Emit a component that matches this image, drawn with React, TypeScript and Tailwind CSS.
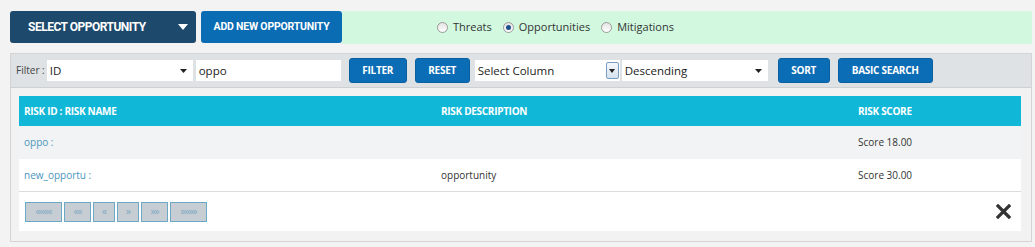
import { useState } from "react";

const font = { fontFamily: '"Open Sans", "Liberation Sans", sans-serif' };

const Radio = ({ checked }: { checked?: boolean }) => (
    <span className="inline-flex items-center justify-center w-[11px] h-[11px] rounded-full border border-[#9a9a9a] bg-gradient-to-b from-[#e4e4e4] to-[#ffffff]">
        {checked && <span className="w-[5px] h-[5px] rounded-full bg-[#1f4f8a]" />}
    </span>
);

const Caret = () => (
    <svg width="7" height="4" viewBox="0 0 7 4"><path d="M0 0h7L3.5 4z" fill="#222" /></svg>
);

const FilterSelect = ({ value, w }: { value: string; w: string }) => (
    <div className={`${w} h-[21px] bg-white flex items-center justify-between pl-[3px] pr-[6px] text-[11.5px] text-[#222]`}>
        <span>{value}</span>
        <Caret />
    </div>
);

const BlueBtn = ({ label, w }: { label: string; w: string }) => (
    <div className={`${w} h-[25px] rounded-[3px] bg-[#0b6db5] border border-[#0a5f9e] flex items-center justify-center text-white text-[10px] font-bold tracking-tight`}>
        {label}
    </div>
);

const pages = [
    { t: "««««", w: "w-[37px]" },
    { t: "««", w: "w-[27px]" },
    { t: "«", w: "w-[22px]" },
    { t: "»", w: "w-[22px]" },
    { t: "»»", w: "w-[27px]" },
    { t: "»»»»", w: "w-[37px]" },
];

const App = () => {
    let [mode] = useState("opportunities");
    return (
        <div className="w-[1035px] h-[247px] bg-[#f3f3f3] pt-[11px] pl-[10px] pr-[3px] overflow-hidden" style={font}>
            <div className="flex h-[33px]">
                <div className="w-[186px] h-[32px] rounded-[3px] bg-[#1c496c] text-white flex items-center pl-[18px] pr-[8px] justify-between text-[12px] font-bold" style={{ fontFamily: 'Roboto, "Liberation Sans", sans-serif' }}>
                    <span className="tracking-[-0.5px]">SELECT OPPORTUNITY</span>
                    <svg width="10" height="6" viewBox="0 0 10 6"><path d="M0 0h10L5 6z" fill="#fff" /></svg>
                </div>
                <div className="ml-[5px] w-[141px] h-[32px] rounded-[3px] bg-[#0a6cb3] text-white flex items-center justify-center text-[10.5px] font-bold tracking-[-0.2px]" style={{ fontFamily: 'Roboto, "Liberation Sans", sans-serif' }}>
                    ADD NEW OPPORTUNITY
                </div>
                <div className="flex-1 h-[33px] bg-[#d2f9e0] flex items-center pl-[95px] text-[11px] text-[#333] gap-[5px]">
                    <Radio checked={mode === "threats"} />
                    <span className="mr-[6px]">Threats</span>
                    <Radio checked={mode === "opportunities"} />
                    <span className="mr-[6px]">Opportunities</span>
                    <Radio checked={mode === "mitigations"} />
                    <span>Mitigations</span>
                </div>
            </div>
            <div className="mt-[9px] h-[189px] border border-[#d4d4d4] bg-[#f2f2f2]">
                <div className="h-[34px] bg-[#dee2e5] border-b border-[#cdd1d4] flex items-center pl-[5px] text-[11.5px]">
                    <span className="text-[#444] mr-[2px] text-[10px]">Filter :</span>
                    <FilterSelect value="ID" w="w-[146px]" />
                    <div className="ml-[3px] w-[145px] h-[21px] bg-white flex items-center pl-[3px] text-[#222]">oppo</div>
                    <div className="ml-[8px]"><BlueBtn label="FILTER" w="w-[58px]" /></div>
                    <div className="ml-[8px]"><BlueBtn label="RESET" w="w-[55px]" /></div>
                    <div className="ml-[5px] w-[145px] h-[21px] bg-white flex items-center justify-between pl-[3px] pr-[1px] text-[#222]">
                        <span>Select Column</span>
                        <span className="w-[13px] h-[17px] border border-[#7a9cc0] rounded-[2px] bg-gradient-to-b from-[#f4f8fc] to-[#d5e2ef] flex items-center justify-center">
                            <svg width="6" height="4" viewBox="0 0 6 4"><path d="M0 0h6L3 4z" fill="#222" /></svg>
                        </span>
                    </div>
                    <div className="ml-[2px]"><FilterSelect value="Descending" w="w-[146px]" /></div>
                    <div className="ml-[10px]"><BlueBtn label="SORT" w="w-[52px]" /></div>
                    <div className="ml-[8px]"><BlueBtn label="BASIC SEARCH" w="w-[95px]" /></div>
                </div>
                <div className="ml-[8px] mr-[10px] mt-[8px] bg-white text-[10px]">
                    <div className="h-[30px] bg-[#11b7d7] flex items-center text-white font-bold text-[10px] tracking-[-0.3px]">
                        <span className="w-[417px] pl-[5px]">RISK ID : RISK NAME</span>
                        <span className="w-[417px] pl-[5px]">RISK DESCRIPTION</span>
                        <span className="pl-[5px]">RISK SCORE</span>
                    </div>
                    <div className="h-[33px] bg-[#f1f3f4] flex items-center">
                        <span className="w-[417px] pl-[5px] text-[#4b95bd]">oppo :</span>
                        <span className="w-[417px] pl-[5px]"></span>
                        <span className="pl-[5px] text-[#333]">Score 18.00</span>
                    </div>
                    <div className="h-[33px] flex items-center border-b border-[#dcdcdc]">
                        <span className="w-[417px] pl-[5px] text-[#4b95bd]">new_opportu :</span>
                        <span className="w-[417px] pl-[5px] text-[#333]">opportunity</span>
                        <span className="pl-[5px] text-[#333]">Score 30.00</span>
                    </div>
                    <div className="h-[39px] flex items-center justify-between pl-[6px] pr-[10px]">
                        <div className="flex gap-[2px]">
                            {pages.map((p, i) => (
                                <div key={i} className={`${p.w} h-[20px] bg-[#c6cdd3] border border-[#6da9c6] flex items-center justify-center text-[#7fa9c4] text-[10px] tracking-[-1px]`}>
                                    {p.t}
                                </div>
                            ))}
                        </div>
                        <svg width="15" height="15" viewBox="0 0 15 15">
                            <path d="M2 2L13 13M13 2L2 13" stroke="#333" strokeWidth="3.2" strokeLinecap="square" />
                        </svg>
                    </div>
                </div>
            </div>
        </div>
    );
};

export default App;
